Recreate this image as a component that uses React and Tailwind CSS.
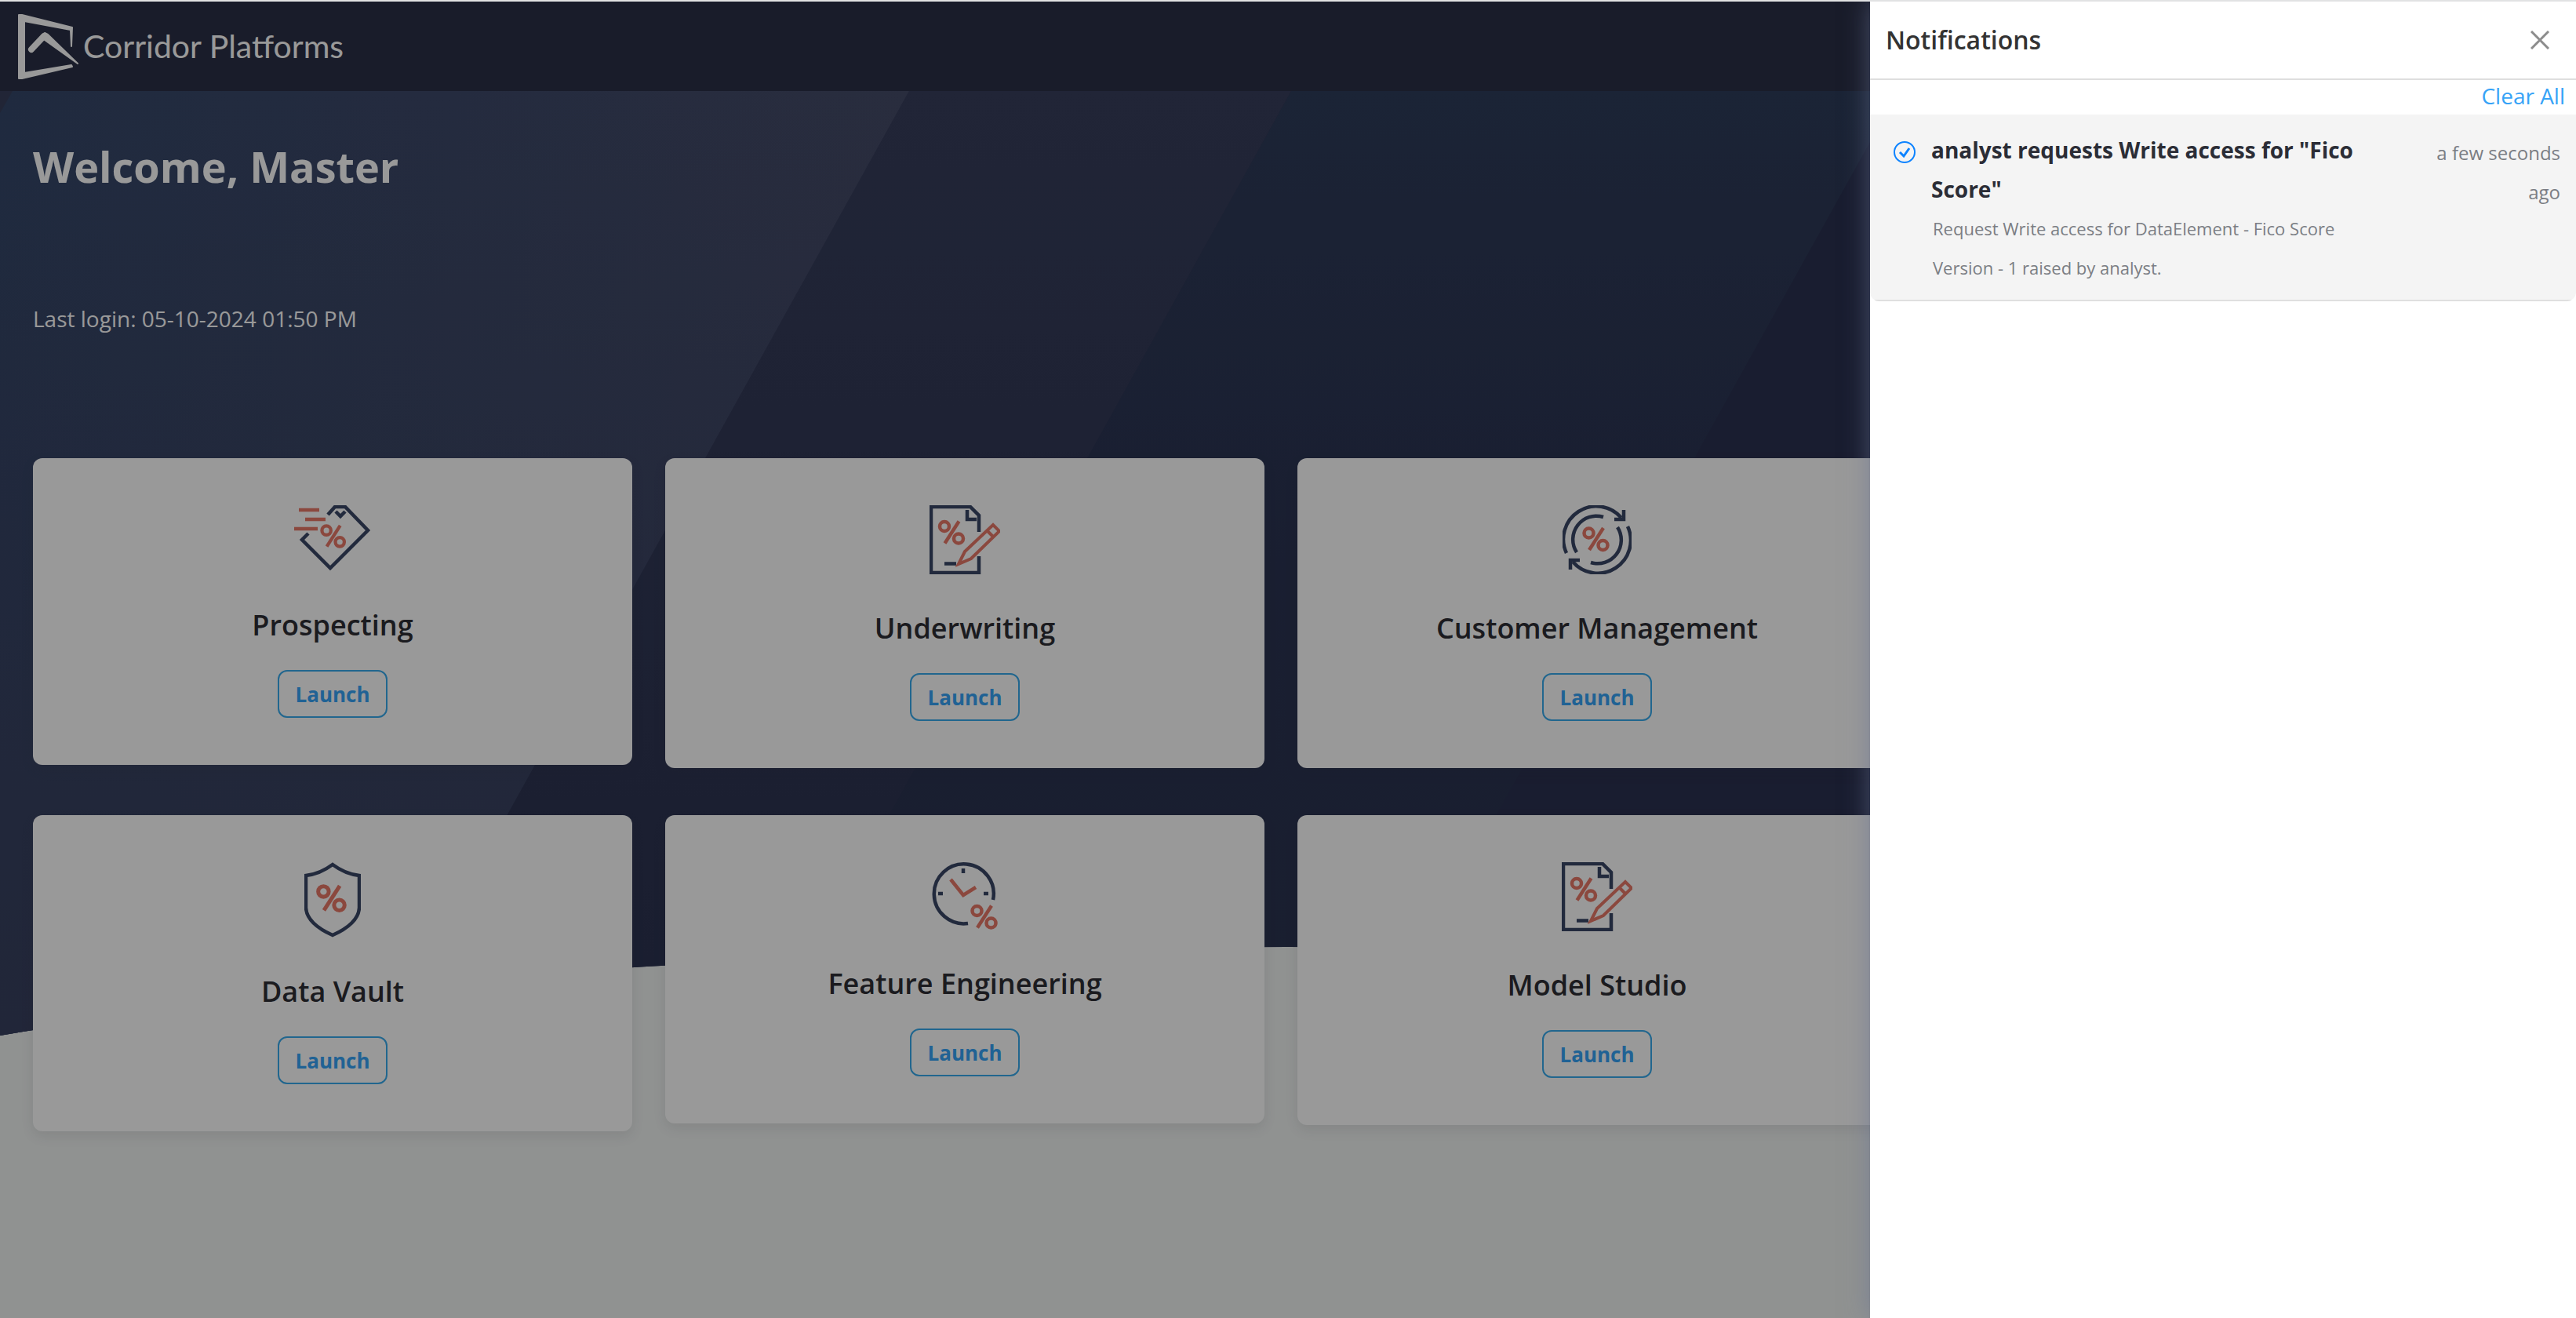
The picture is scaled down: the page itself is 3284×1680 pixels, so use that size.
const navy = '#3a4766';
const red = '#e87868';

function Percent({ x, y, s = 1 }) {
  return (
    <g transform={`translate(${x} ${y}) scale(${s})`} fill="none" stroke={red} strokeWidth="4.5">
      <circle cx="7.5" cy="7.5" r="6" />
      <circle cx="25.5" cy="23" r="6" />
      <path d="M26 1 L8 29" />
    </g>
  );
}

function TagIcon() {
  return (
    <svg width="98" height="84" viewBox="0 0 98 84" fill="none" strokeWidth="4.5" aria-hidden="true">
      <g stroke={navy}>
        <path d="M43 12 L52 2 H65 L94 32 L46 80 L10 44 L18 36" />
        <path d="M53 8 L59 14 L65 8" />
      </g>
      <path d="M6 6 H32 M14 18 H40 M0 30 H30" stroke={red} />
      <Percent x={34} y={25} s={0.95} />
    </svg>
  );
}

function DocumentIcon() {
  return (
    <svg width="90" height="88" viewBox="0 0 90 88" fill="none" strokeWidth="4.5" aria-hidden="true">
      <g stroke={navy}>
        <path d="M63 34 V13 L52 2 H2 V86 H63 V65" />
        <path d="M48 6 V18 H60 M19 74.5 H34" />
      </g>
      <g stroke={red} strokeWidth="4">
        <path d="M37 75 L45 59 L81 25 L89 33 L53 68 Z M73 32 L81 40" />
      </g>
      <Percent x={11.5} y={19.5} />
    </svg>
  );
}

function CycleIcon() {
  return (
    <svg width="88" height="88" viewBox="0 0 88 88" fill="none" strokeWidth="4.5" aria-hidden="true">
      <g stroke={navy}>
        <path d="M5 61 A42 42 0 0 1 75 16" />
        <path d="M83 27 A42 42 0 0 1 13 72" />
        <path d="M78 6 V18 H66 M10 82 V70 H22" />
        <path d="M18 60 A30 30 0 0 1 52 15" />
        <path d="M70 28 A30 30 0 0 1 36 73" />
      </g>
      <Percent x={26} y={28} />
    </svg>
  );
}

function ShieldIcon() {
  return (
    <svg width="72" height="96" viewBox="0 0 72 96" fill="none" strokeWidth="4.5" aria-hidden="true">
      <path d="M36 3 Q20 15 2 17 V58 Q3 78 36 93 Q69 78 70 58 V17 Q52 15 36 3 Z" stroke={navy} />
      <Percent x={16} y={29} s={1.12} />
    </svg>
  );
}

function ClockIcon() {
  return (
    <svg width="84" height="86" viewBox="0 0 84 86" fill="none" strokeWidth="4.5" aria-hidden="true">
      <g stroke={navy}>
        <path d="M46 78 A38 38 0 1 1 78 48" />
        <path d="M40 8 V14 M8 40 H14 M66 40 H72" />
      </g>
      <path d="M24 22 L40 42 L56 32" stroke={red} />
      <Percent x={50} y={54.5} />
    </svg>
  );
}

function Logo() {
  return (
    <svg width="80" height="84" viewBox="22 16 80 84" fill="#ffffff" stroke="#ffffff" strokeLinejoin="round" aria-hidden="true">
      <path
        d="M24 18 L28 18 L92 34 L91 58 L90 37 L31 26 V92 L91 82 L92 84 L28 99 L24 99 Z"
        strokeWidth="2"
      />
      <path d="M53 44 L57 41 L61 43 L99 80 L57 50 Z" strokeWidth="2" />
      <path d="M40 62 L56 45" strokeWidth="8" strokeLinecap="round" />
    </svg>
  );
}

const rows = [
  [
    { title: 'Prospecting', Icon: TagIcon },
    { title: 'Underwriting', Icon: DocumentIcon },
    { title: 'Customer Management', Icon: CycleIcon },
  ],
  [
    { title: 'Data Vault', Icon: ShieldIcon },
    { title: 'Feature Engineering', Icon: ClockIcon },
    { title: 'Model Studio', Icon: DocumentIcon },
  ],
];

function Card({ title, Icon }) {
  return (
    <article className="flex flex-col items-center rounded-xl bg-white py-15 shadow-[0_6px_16px_rgba(60,60,70,0.1)]">
      <Icon />
      <h2 className="mt-11 text-4xl leading-[50px] font-semibold text-[#2d2e35]">{title}</h2>
      <button
        type="button"
        className="mt-8 h-[61px] rounded-xl border-2 border-[#38abed] px-5 text-[26px] leading-[56px] font-bold text-[#36a3f7]"
      >
        Launch
      </button>
    </article>
  );
}

function Backdrop() {
  return (
    <svg
      className="absolute inset-x-0 top-0 h-[1206px] w-full"
      viewBox="0 116 3284 1206"
      preserveAspectRatio="none"
      aria-hidden="true"
    >
      <defs>
        <linearGradient id="band1" x1="0" y1="0" x2="1" y2="0">
          <stop offset="0" stopColor="#35476a" />
          <stop offset="1" stopColor="#454b68" />
        </linearGradient>
        <linearGradient id="band2" x1="0" y1="0" x2="0" y2="1">
          <stop offset="0" stopColor="#373e5c" />
          <stop offset="1" stopColor="#2b3250" />
        </linearGradient>
        <linearGradient id="band3" x1="0" y1="0" x2="0" y2="1">
          <stop offset="0" stopColor="#2e3c5a" />
          <stop offset="0.5" stopColor="#2b3352" />
          <stop offset="1" stopColor="#2b3450" />
        </linearGradient>
        <linearGradient id="fade" x1="0" y1="0" x2="0" y2="1">
          <stop offset="0" stopColor="#38405f" stopOpacity="0" />
          <stop offset="1" stopColor="#38405f" />
        </linearGradient>
        <clipPath id="hill">
          <path d="M0 116 H3284 V1320 C2884 1253 2280 1207 1640 1207 C1000 1207 400 1253 0 1320 Z" />
        </clipPath>
      </defs>
      <g clipPath="url(#hill)">
        <rect y="116" width="3284" height="1206" fill="#2b3150" />
        <path d="M1646 116 H2420 L1750 1322 H976 Z" fill="url(#band3)" />
        <path d="M1159 116 H1646 L976 1322 H489 Z" fill="url(#band2)" />
        <path d="M0 116 H1159 L489 1322 H0 Z" fill="url(#band1)" />
        <path d="M0 116 H1159 L489 1322 H0 Z" fill="url(#fade)" />
        <path d="M0 116 H16 L0 144 Z" fill="#383e5a" />
      </g>
    </svg>
  );
}

function Dashboard() {
  return (
    <div className="flex flex-1 flex-col bg-[#f0f3f2]">
      <header className="flex h-[114px] items-center gap-1 bg-[#2b3046] px-[22px] text-white">
        <Logo />
        <span className="font-[Lato,sans-serif] text-[41px]">Corridor Platforms</span>
      </header>
      <main className="relative flex-1">
        <Backdrop />
        <div className="relative pt-[60px] pr-[60px] pl-[42px]">
          <h1 className="text-[54px] leading-[72px] font-bold text-white">Welcome, Master</h1>
          <p className="mt-[138px] text-[28px] leading-[40px] text-white">Last login: 05-10-2024 01:50 PM</p>
          <div className="mt-[158px] flex flex-col gap-15">
            {rows.map((cards) => (
              <section key={cards[0].title} className="grid grid-cols-4 items-start gap-x-[42px]">
                {cards.map((card) => (
                  <Card key={card.title} {...card} />
                ))}
              </section>
            ))}
          </div>
        </div>
      </main>
    </div>
  );
}

function Notifications() {
  return (
    <aside
      aria-label="Notifications"
      className="absolute inset-y-0 right-0 w-[900px] bg-white shadow-[0_0_30px_rgba(103,115,150,0.6)]"
    >
      <div className="flex h-[100px] items-center justify-between border-b-2 border-[#dedede] pr-8 pl-5">
        <h2 className="text-[32px] font-semibold text-[#333333]">Notifications</h2>
        <button type="button" aria-label="Close" className="p-[2px] text-[#8c8c8c]">
          <svg width="24" height="24" viewBox="0 0 24 24" fill="none" stroke="currentColor" strokeWidth="3" aria-hidden="true">
            <path d="M1 1 L23 23 M23 1 L1 23" />
          </svg>
        </button>
      </div>
      <div className="flex h-11 items-start justify-end pr-[14px]">
        <button type="button" className="text-[28px] leading-[40px] text-[#36a3f7]">
          Clear All
        </button>
      </div>
      <article className="overflow-hidden rounded-b-xl">
        <div className="flex border-b-2 border-[#dfdfdf] bg-[#f4f4f4] pt-5 pr-5 pb-4 pl-[30px]">
          <svg className="mt-[14px] mr-5 shrink-0" width="28" height="28" viewBox="0 0 28 28" fill="none" stroke="#0d83ff" strokeWidth="2" aria-hidden="true">
            <circle cx="14" cy="14" r="13" />
            <path d="M8 14 L13 19 L20 9" strokeWidth="3" />
          </svg>
          <div className="w-[580px] shrink-0">
            <h3 className="text-[28px] leading-[50px] font-bold text-[#2b2d36]">
              analyst requests Write access for "Fico Score"
            </h3>
            <p className="w-[540px] pl-[2px] text-[22px] leading-[50px] text-[#7b7e84]">
              Request Write access for DataElement - Fico Score Version - 1 raised by analyst.
            </p>
          </div>
          <time className="ml-auto w-[180px] pt-1 text-right text-[24px] leading-[50px] text-[#7b7e84]">
            a few seconds ago
          </time>
        </div>
      </article>
    </aside>
  );
}

export default function App() {
  return (
    <div className="flex min-h-screen flex-col border-t-2 border-[#e1e2e3] font-['Open_Sans',sans-serif]">
      <div className="relative flex flex-1 flex-col overflow-hidden">
        <Dashboard />
        <div className="absolute inset-0 bg-black/40" />
        <Notifications />
      </div>
    </div>
  );
}
